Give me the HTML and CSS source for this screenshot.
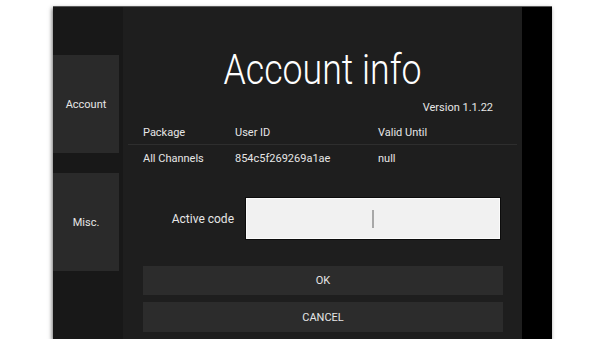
FILE: index.html
```html
<!DOCTYPE html>
<html lang="en">
<head>
    <meta charset="UTF-8">
    <meta name="viewport" content="width=device-width, initial-scale=1.0">
    <title>Account info</title>
    <link rel="stylesheet" href="styles.css">
</head>
<body>
    <div class="frame">
        <nav class="sidebar">
            <a href="#" class="tab tab-account">Account</a>
            <a href="#" class="tab">Misc.</a>
        </nav>
        <main class="main">
            <h1>Account info</h1>
            <p class="version">Version 1.1.22</p>
            <div class="table">
                <div class="row head">
                    <span>Package</span>
                    <span>User ID</span>
                    <span>Valid Until</span>
                </div>
                <div class="row">
                    <span>All Channels</span>
                    <span>854c5f269269a1ae</span>
                    <span>null</span>
                </div>
            </div>
            <div class="code-row">
                <label for="code">Active code</label>
                <div class="code-input" id="code"><span class="caret"></span></div>
            </div>
            <div class="actions">
                <button>OK</button>
                <button>CANCEL</button>
            </div>
        </main>
        <div class="edge"></div>
    </div>
</body>
</html>
```

FILE: styles.css
```css
body {
    margin: 0;
    padding: 0;
    background-color: #ffffff;
    font-family: Roboto, "Liberation Sans", sans-serif;
    color: #e6e6e6;
}
.frame {
    display: flex;
    width: 499px;
    height: 333px;
    margin: 6px 0 0 53px;
    background-color: #1e1e1e;
    box-shadow: -1px 2px 4px rgba(0, 0, 0, 0.55);
    border-top: 1px solid #5a5a5a;
    box-sizing: border-box;
}
.sidebar {
    width: 70px;
    flex: none;
    background-color: #181818;
    display: flex;
    flex-direction: column;
    gap: 20px;
    padding-top: 48px;
}
.tab {
    display: flex;
    align-items: center;
    justify-content: center;
    width: 66px;
    height: 98px;
    background-color: #2a2a2a;
    color: #e6e6e6;
    font-size: 11px;
    text-decoration: none;
}
.main {
    flex: 1;
    padding: 39px 0 0 0;
}
.main h1 {
    margin: 0;
    font-size: 42px;
    font-weight: 300;
    line-height: 48px;
    text-align: center;
    color: #ffffff;
    transform: scaleX(0.85);
}
.version {
    margin: 6px 29px 0 0;
    font-size: 11px;
    line-height: 16px;
    text-align: right;
}
.table {
    margin: 0 5px;
    font-size: 11px;
    line-height: 16px;
}
.row {
    display: grid;
    grid-template-columns: 92px 143px 1fr;
    padding: 6px 0 0 15px;
}
.row.head {
    padding: 9px 0 3px 15px;
    border-bottom: 1px solid #2e2e2e;
}
.code-row {
    display: flex;
    align-items: center;
    gap: 12px;
    margin-top: 31px;
    padding-left: 20px;
}
.code-row label {
    width: 91px;
    text-align: right;
    font-size: 12px;
}
.code-input {
    width: 252px;
    height: 39px;
    background-color: #f1f1f1;
    border: 1px solid #fbfbfb;
    box-shadow: 0 0 0 1px #0c0c0c;
    display: flex;
    align-items: center;
    justify-content: center;
}
.caret {
    width: 2px;
    height: 18px;
    background-color: #a8a8a8;
}
.actions {
    display: flex;
    flex-direction: column;
    gap: 7px;
    margin: 27px 19px 0 20px;
}
.actions button {
    height: 29px;
    border: none;
    background-color: #2c2c2c;
    color: #e6e6e6;
    font-family: Roboto, "Liberation Sans", sans-serif;
    font-size: 11px;
    cursor: pointer;
}
.actions button + button {
    height: 30px;
}
.edge {
    width: 30px;
    flex: none;
    background-color: #000000;
}
```
